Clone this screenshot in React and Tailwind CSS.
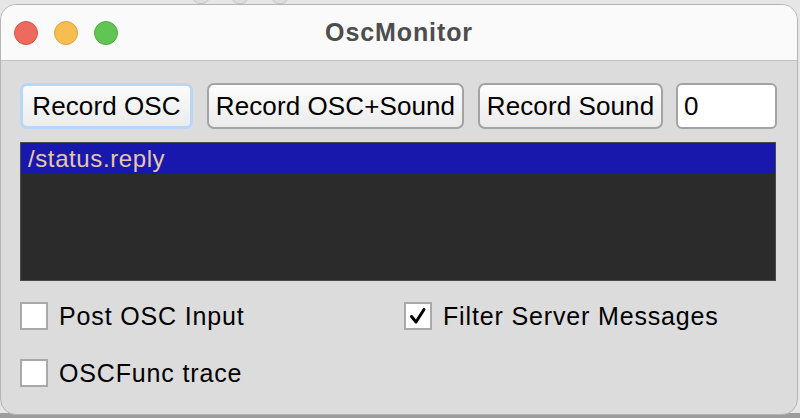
import React, { useState } from "react";

const font = { fontFamily: '"Liberation Sans", Arial, Helvetica, sans-serif' };

const Btn = ({ label, focused, className }) => (
  <button
    className={
      "h-[46px] rounded-[7px] text-[26px] tracking-[0.1px] text-black leading-none flex items-center justify-center " +
      (focused
        ? "border-[3px] border-[#b6d6fa] bg-gradient-to-b from-[#fbfbfb] to-[#ececec] "
        : "border-2 border-[#a3a3a3] bg-gradient-to-b from-[#fdfdfd] to-[#ebebeb] ") +
      className
    }
  >
    {label}
  </button>
);

const Check = ({ label, checked, onClick }) => (
  <div className="flex items-center h-[28px] cursor-default" onClick={onClick}>
    <div className="w-[28px] h-[28px] bg-white border-2 border-[#a9a9a9] flex items-center justify-center">
      {checked && (
        <svg width="20" height="20" viewBox="0 0 20 20">
          <path d="M3.5 10.5 L8 16 L16 3.5" fill="none" stroke="#000" strokeWidth="3" strokeLinecap="round" strokeLinejoin="round" />
        </svg>
      )}
    </div>
    <span className="ml-[11px] text-[25px] tracking-[0.85px] text-black leading-none">{label}</span>
  </div>
);

const App = () => {
  const [postInput, setPostInput] = useState(false);
  const [filter, setFilter] = useState(true);
  const [trace, setTrace] = useState(false);

  return (
    <div className="w-[800px] h-[418px] bg-[#e6e6e6] overflow-hidden relative" style={font}>
      {/* window behind */}
      <div className="absolute top-[-12px] left-[192px] w-[18px] h-[16px] rounded-full border border-[#c4c4c4] bg-[#dedede]" />
      <div className="absolute top-[-12px] left-[231px] w-[18px] h-[16px] rounded-full border border-[#c4c4c4] bg-[#dedede]" />
      <div className="absolute top-[-12px] left-[271px] w-[18px] h-[16px] rounded-full border border-[#c4c4c4] bg-[#dedede]" />
      <div className="absolute bottom-0 left-0 w-full h-[5px] bg-[#9c9c9c]" />

      <div className="relative mt-[4px] w-[798px] h-[411px] rounded-[16px] overflow-hidden border border-[#b5b5b5] bg-[#dcdcdc] flex flex-col">
        {/* title bar */}
        <div className="h-[56px] shrink-0 bg-[#fafafa] border-b border-[#c2c2c2] flex items-center relative">
          <div className="flex items-center gap-[16px] pl-[13px]">
            <div className="w-[24px] h-[24px] rounded-full bg-[#ee6a5f] border border-[#d8574c]" />
            <div className="w-[24px] h-[24px] rounded-full bg-[#f6be50] border border-[#dca43c]" />
            <div className="w-[24px] h-[24px] rounded-full bg-[#61c554] border border-[#50ac44]" />
          </div>
          <div className="absolute inset-0 flex items-center justify-center pointer-events-none">
            <span className="text-[25px] font-bold text-[#4d4d4d] tracking-[0.9px]">OscMonitor</span>
          </div>
        </div>

        {/* body */}
        <div className="px-[19px] pt-[22px]">
          <div className="flex items-center">
            <Btn label="Record OSC" focused className="w-[173px]" />
            <Btn label="Record OSC+Sound" className="w-[257px] ml-[14px]" />
            <Btn label="Record Sound" className="w-[185px] ml-[14px]" />
            <div className="ml-[13px] w-[101px] h-[46px] bg-white border-2 border-[#a3a3a3] rounded-[6px] flex items-center pl-[6px] text-[26px] text-black">
              0
            </div>
          </div>

          <div className="mt-[13px] w-[756px] h-[139px] bg-[#2b2b2b] border border-[#4a4a4a]">
            <div className="h-[31px] bg-[#1818ad] flex items-center pl-[7px] text-[24px] text-[#e6c9a6] tracking-[0.6px]">
              /status.reply
            </div>
          </div>

          <div className="grid grid-cols-[384px_1fr] gap-y-[29px] mt-[21px]">
            <Check label="Post OSC Input" checked={postInput} onClick={() => setPostInput(!postInput)} />
            <Check label="Filter Server Messages" checked={filter} onClick={() => setFilter(!filter)} />
            <Check label="OSCFunc trace" checked={trace} onClick={() => setTrace(!trace)} />
          </div>
        </div>
      </div>
    </div>
  );
};

export default App;
